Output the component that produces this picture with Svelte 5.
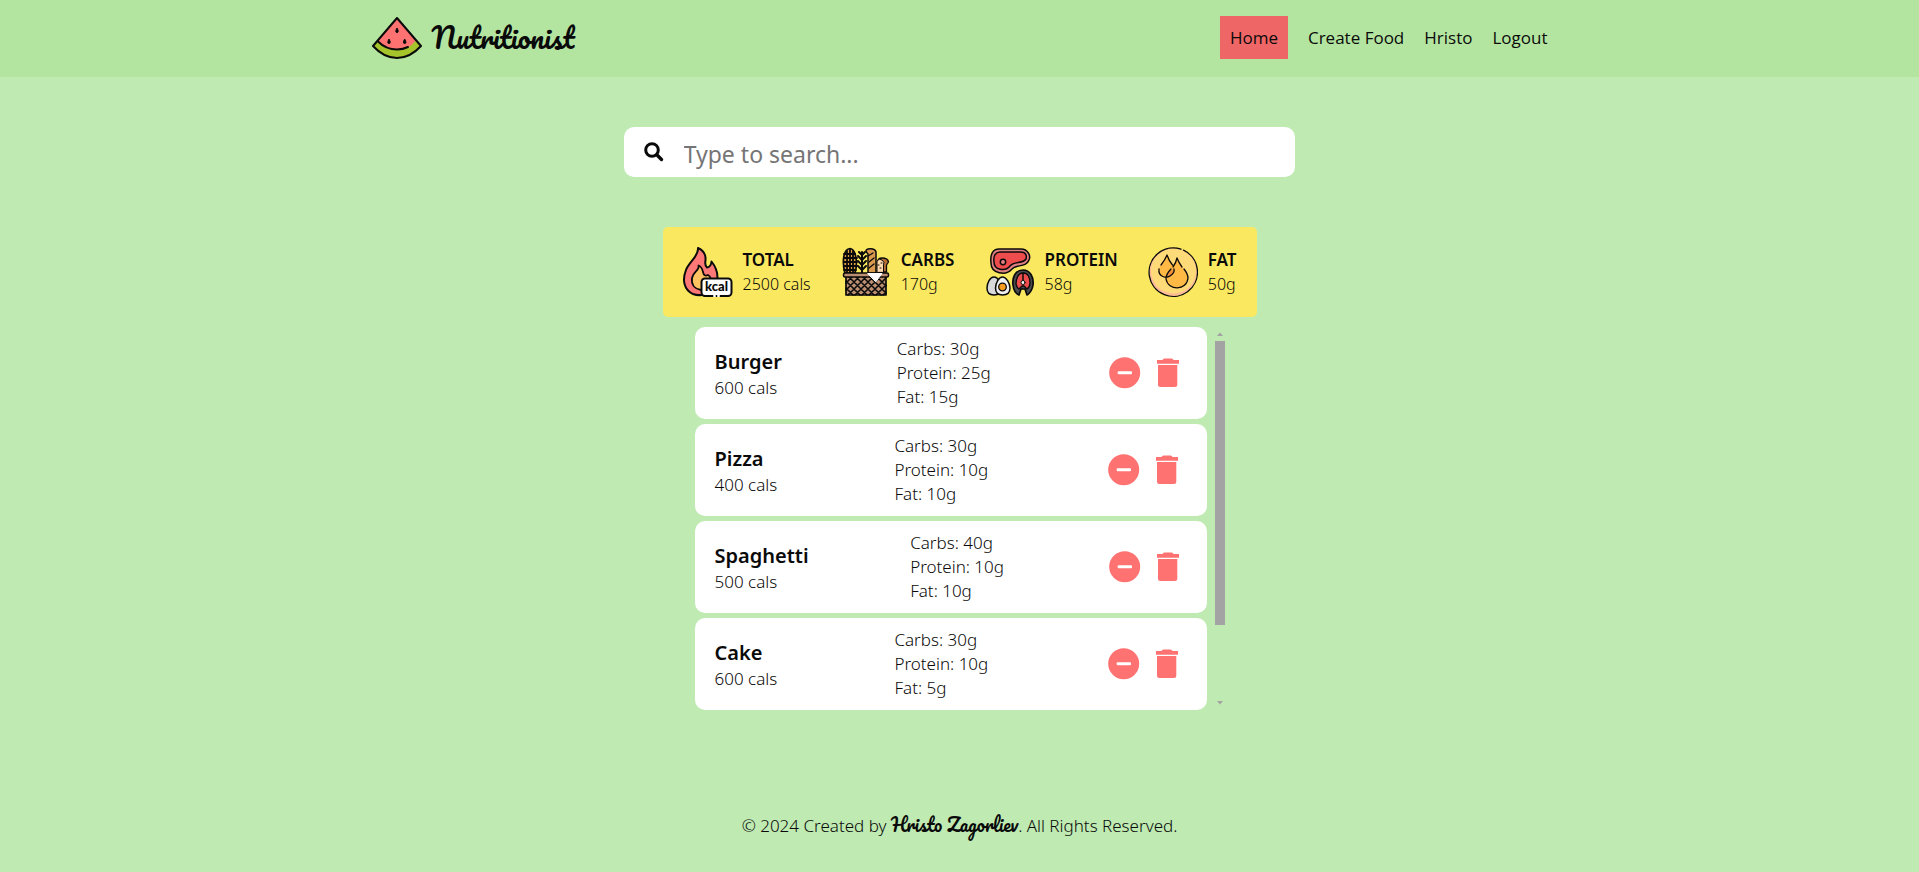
<script>
  const links = ['Create Food', 'Hristo', 'Logout'];

  const totals = [
    { icon: 'flame', label: 'TOTAL', value: '2500 cals' },
    { icon: 'basket', label: 'CARBS', value: '170g' },
    { icon: 'protein', label: 'PROTEIN', value: '58g' },
    { icon: 'drops', label: 'FAT', value: '50g' }
  ];

  let foods = $state([
    { name: 'Burger', cals: 600, carbs: 30, protein: 25, fat: 15 },
    { name: 'Pizza', cals: 400, carbs: 30, protein: 10, fat: 10 },
    { name: 'Spaghetti', cals: 500, carbs: 40, protein: 10, fat: 10 },
    { name: 'Cake', cals: 600, carbs: 30, protein: 10, fat: 5 }
  ]);

  let query = $state('');

  function remove(food) {
    foods = foods.filter((f) => f !== food);
  }
</script>

<header class="header">
  <div class="bar">
    <a class="brand" href="#home">
      <svg width="50" height="42" viewBox="0 0 50 42" aria-hidden="true">
        <path d="M25 1 49 29Q38 41 25 41T1 29Z" fill="#a5c32b" />
        <path d="M25 1 44 23.500Q36 33 25 33T5.500 24Z" fill="#ff7272" />
        <path d="M6 24.500Q14 32.500 25 32.500Q31 32.500 36 30" fill="none" stroke="#0a0a0a" stroke-width="2" stroke-linecap="round" />
        <path d="M25 1 49 29Q38 41 25 41T1 29Z" fill="none" stroke="#0a0a0a" stroke-width="2" stroke-linejoin="round" />
        <path d="M25 11q-2.500 4.500 0 4.500t0-4.500M17 22q-2.500 4.500 0 4.500t0-4.500M32.700 22q-2.500 4.500 0 4.500t0-4.500" fill="#0a0a0a" stroke="#0a0a0a" />
      </svg>
      <span class="script logo-text">Nutritionist</span>
    </a>
    <nav class="nav">
      <a class="active" href="#home">Home</a>
      {#each links as link}
        <a href="#{link.toLowerCase().replace(' ', '-')}">{link}</a>
      {/each}
    </nav>
  </div>
</header>

<main class="main">
  <label class="search">
    <svg width="20" height="20" viewBox="0 0 20 20" aria-hidden="true">
      <circle cx="8" cy="8" r="6.300" fill="none" stroke="#0a0a0a" stroke-width="3" />
      <path d="m12.800 12.800 4.700 4.700" stroke="#0a0a0a" stroke-width="3.400" stroke-linecap="round" />
    </svg>
    <input type="text" placeholder="Type to search..." aria-label="Search" bind:value={query} />
  </label>

  <section class="totals">
    {#each totals as t}
      <div class="total">
        <svg width="50" height="50" viewBox="0 0 50 50" aria-hidden="true" stroke-linejoin="round" stroke-linecap="round">
          {#if t.icon === 'flame'}
            <path d="M15 1C16 9 6 15 3 23C-1 33 1 43 10 47Q14 48.500 19 48L34 34Q36 24 28.500 14.500Q28 20 24 20.500C20 17 24 14 22 8Q20 3 15 1Z" fill="#ff7878" stroke="#0a0a0a" stroke-width="2" />
            <path d="M15.500 18.500C17 23 10 25 9 31C8 38 12 42 18 43L28 32Q27 29 25 28Q21 30 20 25Q19 20 15.500 18.500Z" fill="#ffc461" stroke="#0a0a0a" stroke-width="1.800" />
            <rect x="18.500" y="31.500" width="30" height="17.500" rx="3.500" fill="#fff" stroke="#0a0a0a" stroke-width="2" />
            <path d="M31 49h1M35 49h1" stroke="#fff" stroke-width="2" />
            <text x="33.500" y="44" text-anchor="middle" class="kcal">kcal</text>
          {:else if t.icon === 'basket'}
            <path d="M4 26C1 16 2 2 9 1.500C15 2 17 16 14 26Z" fill="#dca043" stroke="#0a0a0a" stroke-width="1.700" />
            <path d="M6 4v22M9 2v24M12 4v22M3 7h11M3 11h13M3 15h13M3 19h13M3 23h12" fill="none" stroke="#0a0a0a" stroke-width="1.800" />
            <path d="M21 5v21M21 8l-3-3M21 8l3-3M21 13l-4-4M21 13l4-4M21 18l-4-4M21 18l4-4M21 23l-4-4M21 23l4-4" fill="none" stroke="#0a0a0a" stroke-width="2" />
            <path d="M37 25V14Q37 11 41 11Q47 11 47.500 15L45.500 18V25Z" fill="#b66d35" stroke="#0a0a0a" stroke-width="1.300" />
            <path d="M36 25V14Q38 11 41 13Q44 15 42.500 18V25Z" fill="#ffd8ad" stroke="#0a0a0a" />
            <path d="M37 18h1M40 16h1M39 21h1" stroke="#0a0a0a" />
            <path d="M27 26V7Q23 3 27 2Q34 1 35 5V26Z" fill="#d99a50" stroke="#0a0a0a" stroke-width="1.500" />
            <path d="m27 9 5-3M28 15l5-4M28 21l5-4" stroke="#0a0a0a" stroke-width="1.300" />
            <path d="M5 29h40v19H5Z" fill="#bc8f72" stroke="#0a0a0a" stroke-width="1.700" />
            <path d="m5 36 6-6m-6 13 13-13M7 48l18-18M14 48l18-18M21 48l18-18M28 48l17-17M35 48l10-10M42 48l3-3M5 41l7 7M5 34l14 14M8 30l18 18M15 30l18 18M22 30l18 18M29 30l16 16M36 30l9 9" fill="none" stroke="#0a0a0a" stroke-width="1.600" />
            <rect x="2.500" y="26" width="45" height="4" rx="1.500" fill="#bc8f72" stroke="#0a0a0a" stroke-width="1.500" />
            <path d="M27 26.500H41L35 34.500Z" fill="#fff" stroke="#fff" />
          {:else if t.icon === 'protein'}
            <path d="M14 2H36C43 2 46 9 44 13C41 21 31 17 27 22C21 29 6 27 6 16C5 7 8 2 14 2Z" fill="#e18181" stroke="#0a0a0a" stroke-width="1.500" />
            <path d="M15 5H36C41 5 42 9 41 12C38 17 29 14 25 19C20 25 9 23 9 15C8 8 11 5 15 5Z" fill="#ef4d4d" stroke="#0a0a0a" stroke-width="1.500" />
            <circle cx="18" cy="15" r="2.700" fill="#e18181" stroke="#0a0a0a" stroke-width="1.500" />
            <path d="M9 30C5 30 2 36 2 41C2 46 5 48 9 48S16 46 16 41S13 30 9 30Z" fill="#d9d9dc" stroke="#0a0a0a" stroke-width="1.500" />
            <path d="M17.500 30C14 30 10.500 36 10.500 41C10.500 46 13 48 17.500 48S25 46 25 41S21 30 17.500 30Z" fill="#f0f0f0" stroke="#0a0a0a" stroke-width="1.500" />
            <circle cx="17.500" cy="40" r="3.800" fill="#f79b20" stroke="#0a0a0a" stroke-width="1.300" />
            <path d="M38 23C30 23 27 31 28 38Q29 46 34 48L36 42H40L42 48Q47 45 48 38C49 30 45 23 38 23Z" fill="#4b4b4f" stroke="#0a0a0a" stroke-width="1.700" />
            <path d="M38 26C33 26 31 32 31 37Q32 41 34 42L37 39H39L42 42Q45 40 45 36C45 30 43 26 38 26Z" fill="#ef4d4d" stroke="#0a0a0a" stroke-width="1.300" />
            <path d="M38 26v8" stroke="#0a0a0a" stroke-width="1.500" />
            <circle cx="38" cy="35.500" r="2" fill="#fff" stroke="#0a0a0a" />
          {:else}
            <circle cx="25" cy="25" r="24" fill="#fb9" />
            <circle cx="25.500" cy="24" r="22.500" fill="#ffda79" />
            <path d="M35.500 3.200A24.200 24.200 0 1 1 33 2.200" fill="none" stroke="#0a0a0a" stroke-width="1.300" />
            <path d="M19 8C16 14 11 18 11 24C12 33 26 33 26 23C26 18 22 14 19 8Z" fill="#ffb944" />
            <path d="M29 11C26 19 18 25 18 32C20 44 39 44 40 31C39 24 32 19 29 11Z" fill="#ffb944" />
            <path d="M20 25Q19 29 19 31Q26 29 26 22Z" fill="#ee8e3b" />
            <path d="M13 18Q17 13 19 8Q21 14 24.500 18M11 22C10 29 17 32 22 29Q27 26 26 22M25 20Q28 16 29 11Q31 16 34 20M36 22Q40 27 40 31C39 44 20 44 18 32Q18 27 23 22" fill="none" stroke="#0a0a0a" stroke-width="1.300" />
          {/if}
        </svg>
        <div>
          <h2>{t.label}</h2>
          <p>{t.value}</p>
        </div>
      </div>
    {/each}
  </section>

  <div class="list-area">
    <ul class="list">
      {#each foods as food (food.name)}
        <li class="card">
          <div>
            <h3>{food.name}</h3>
            <p>{food.cals} cals</p>
          </div>
          <div>
            <p>Carbs: {food.carbs}g</p>
            <p>Protein: {food.protein}g</p>
            <p>Fat: {food.fat}g</p>
          </div>
          <div class="actions">
            <button type="button" aria-label="Decrease {food.name}">
              <svg width="38" height="38" viewBox="0 0 38 38" aria-hidden="true">
                <circle cx="18.700" cy="18.700" r="15.500" fill="#ff7272" />
                <rect x="11.700" y="17.200" width="14.300" height="3" rx="1" fill="#fff" />
              </svg>
            </button>
            <button type="button" aria-label="Delete {food.name}" onclick={() => remove(food)}>
              <svg width="38" height="38" viewBox="0 0 38 38" aria-hidden="true">
                <path d="M8 6h5.500q.5-1.500 2-1.500h7q1.500 0 2 1.500H30v3.700H8ZM9 11h19.300v19.500q0 2.500-2.500 2.500H11.500Q9 33 9 30.500Z" fill="#ff7272" />
              </svg>
            </button>
          </div>
        </li>
      {/each}
    </ul>
    <div class="scrollbar" aria-hidden="true">
      <svg width="10" height="14" viewBox="0 0 10 14"><path d="M2 9 5 5.500 8 9Z" fill="#a3a3a3" /></svg>
      <div class="track"><div class="thumb"></div></div>
      <svg width="10" height="14" viewBox="0 0 10 14"><path d="M2 5 5 8.500 8 5Z" fill="#a3a3a3" /></svg>
    </div>
  </div>
</main>

<footer class="footer">
  © 2024 Created by <span class="script">Hristo Zagorliev</span>. All Rights Reserved.
</footer>

<style>
  :global(body) {
    background: #bfeab2;
    color: #0a0a0a;
    font-family: 'Segoe UI', 'Noto Sans', sans-serif;
    font-size: 16px;
    line-height: 24px;
  }

  h2, h3, p, ul {
    margin: 0;
    padding: 0;
  }

  .script {
    font-family: 'Pacifico', 'Liberation Serif', cursive;
    font-weight: 400;
  }

  .header {
    background: #b3e5a1;
    padding: 16px 20px 18px;
  }

  .bar {
    display: flex;
    align-items: center;
    justify-content: space-between;
    max-width: 1176px;
    margin: 0 auto;
  }

  .brand {
    display: flex;
    align-items: center;
    gap: 10px;
    color: inherit;
    text-decoration: none;
  }

  .logo-text {
    font-size: 28px;
    line-height: 40px;
  }

  .nav {
    display: flex;
    align-items: center;
    gap: 20px;
  }

  .nav a {
    color: inherit;
    font-family: 'Segoe UI', 'Open Sans', sans-serif;
    font-size: 17px;
    font-weight: 500;
    line-height: 23px;
    text-decoration: none;
  }

  .nav .active {
    background: #ee6666;
    padding: 10px;
  }

  .main {
    display: flex;
    flex-direction: column;
    align-items: center;
    padding-top: 50px;
  }

  .search {
    box-sizing: border-box;
    display: flex;
    align-items: center;
    gap: 20px;
    width: 35%;
    min-width: 320px;
    height: 50px;
    padding: 0 20px;
    border-radius: 10px;
    background: #fff;
  }

  .search input {
    flex: 1;
    min-width: 0;
    padding: 4px 0 0;
    border: 0;
    outline: 0;
    background: none;
    color: inherit;
    font-family: inherit;
    font-size: 23px;
  }

  .search input::placeholder {
    color: #757575;
  }

  .totals {
    box-sizing: border-box;
    display: flex;
    flex-wrap: wrap;
    align-items: center;
    justify-content: space-between;
    width: 100%;
    max-width: 594px;
    margin: 50px 0 10px;
    padding: 20px;
    border-radius: 5px;
    background: #fae860;
  }

  .total {
    display: flex;
    align-items: center;
    gap: 10px;
  }

  .total h2 {
    font-size: 17px;
    font-weight: 600;
    line-height: 24px;
  }

  .total p {
    font-size: 16px;
    font-weight: 300;
  }

  .kcal {
    font-family: Lato, sans-serif;
    font-size: 13px;
    font-weight: 900;
    fill: #0a0a0a;
  }

  .list-area {
    display: flex;
    gap: 8px;
    width: 100%;
    max-width: 530px;
  }

  .list {
    display: flex;
    flex: 1;
    flex-direction: column;
    gap: 5px;
    list-style: none;
  }

  .card {
    display: flex;
    align-items: center;
    justify-content: space-between;
    padding: 10px 20px;
    border-radius: 10px;
    background: #fff;
    font-size: 17px;
    font-weight: 300;
  }

  .card h3 {
    padding-top: 2px;
    font-size: 20px;
    font-weight: 600;
    line-height: 28px;
  }

  .actions {
    display: flex;
    gap: 5px;
  }

  .actions button {
    display: flex;
    padding: 0;
    border: 0;
    background: none;
    cursor: pointer;
  }

  .scrollbar {
    display: flex;
    flex-direction: column;
  }

  .track {
    flex: 1;
  }

  .thumb {
    height: 80%;
    background: #a3a3a3;
  }

  .footer {
    padding: 102px 20px 34px;
    font-size: 17px;
    font-weight: 300;
    line-height: 26px;
    text-align: center;
  }

  .footer .script {
    font-size: 18px;
  }
</style>
